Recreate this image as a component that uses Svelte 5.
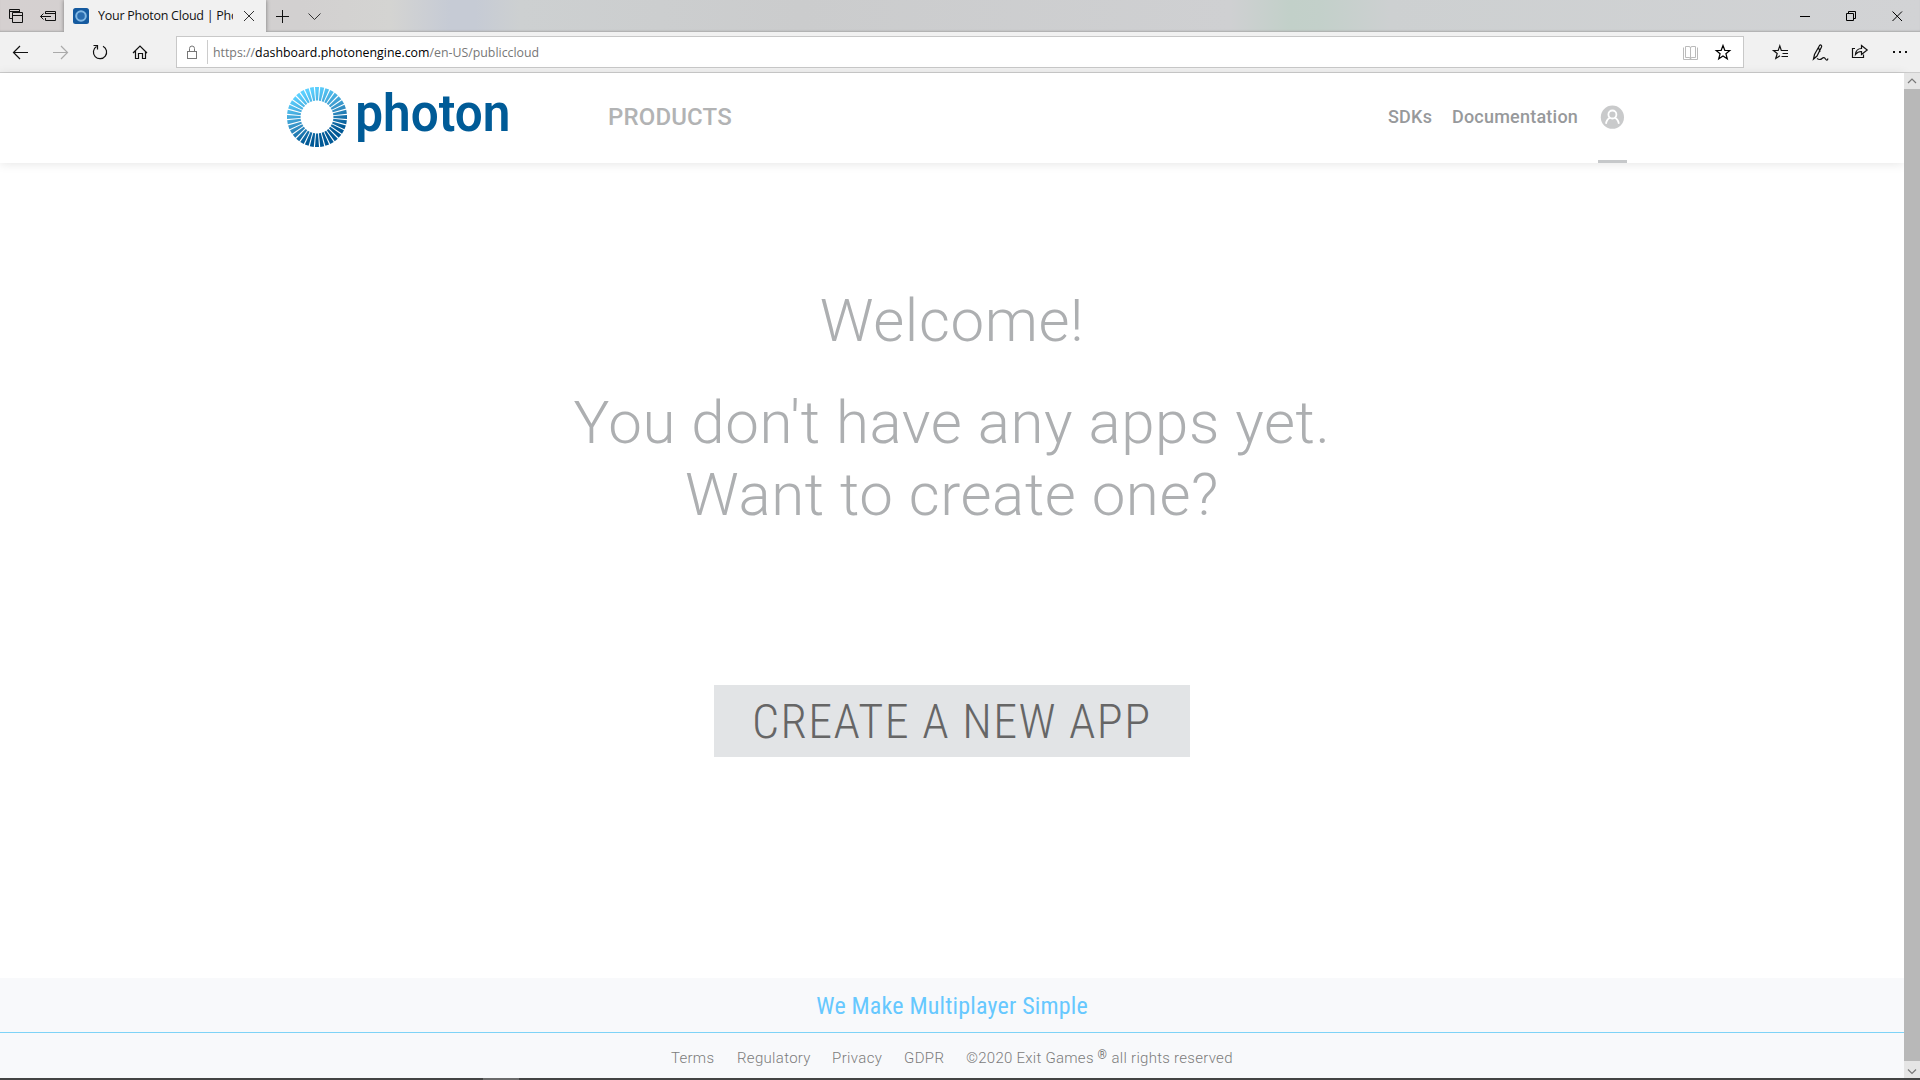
<script>
  const rays = Array.from({ length: 36 }, (_, i) => i * 10);
  const links = [
    { text: 'Terms', w: 43, gap: 22.5 },
    { text: 'Regulatory', w: 73.5, gap: 22 },
    { text: 'Privacy', w: 50, gap: 22 },
    { text: 'GDPR', w: 40, gap: 22 }
  ];
</script>

<div class="window">
  <div class="tabbar">
    <div class="tabtools">
      <svg width="64" height="32" viewBox="0 0 64 32" fill="none" stroke="#111">
        <path d="M12.5 18.5H9.5V9.5H19.5V12M9.5 11.5H19.500M12.500 21V12.500H22.500V22.500H12.500ZM12.500 15.500H22.500" />
        <path d="M45.500 14V11.500H55.500V20.500H45.500V18M45.500 13.500H55.500M40.500 16.500H51M43.500 13.500L40.500 16.500L43.500 19.500" />
      </svg>
    </div>
    <div class="tab">
      <svg class="fav" width="16" height="16" viewBox="0 0 16 16">
        <rect width="16" height="16" rx="2.500" fill="#155a9f" />
        <circle cx="8" cy="8" r="4.800" fill="#2a6db0" stroke="#82b8e4" stroke-width="2" />
      </svg>
      <span class="title">Your Photon Cloud | Photon</span>
      <svg width="12" height="12" viewBox="0 0 12 12" stroke="#333" fill="none"><path d="M1 1L11 11M11 1L1 11" /></svg>
    </div>
    <svg class="newtab" width="60" height="32" viewBox="0 0 60 32" stroke="#111" fill="none">
      <path d="M10 16.500H23M16.500 10V23" /><path d="M42.500 13.500L48.500 19.500L54.500 13.500" stroke="#333" />
    </svg>
    <svg class="controls" width="130" height="32" viewBox="0 0 130 32" stroke="#000" fill="none">
      <path d="M10 16.500H20M56.500 13.500H63.500V20.500H56.500ZM58.500 13V11.500H65.500V18.500H64M102.500 11.500L112 21M112 11.500L102.500 21" />
    </svg>
  </div>

  <div class="toolbar">
    <svg width="176" height="40" viewBox="0 32 176 40" fill="none" stroke="#111" stroke-width="1.200">
      <path d="M28 52.500H13.500M20 46L13.500 52.500L20 59" />
      <path d="M53 52.500H67.500M61 46L67.500 52.500L61 59" stroke="#aaa" />
      <path d="M103 46.200A6.600 6.600 0 1 1 96.500 46.500M93.500 45.500H97.500V49.500" />
      <path d="M133 53L140 46L147 53M135.500 51V58.500H138.500V53.500H142.500V58.500H145.500V51" />
    </svg>
    <div class="address">
      <svg width="34" height="30" viewBox="177 37 34 30" fill="none" stroke="#777">
        <rect x="187.500" y="51.500" width="9" height="7" /><path d="M189.500 51V48.500Q189.500 46 192 46T194.500 48.500V51" /><path d="M207.500 40V64" stroke="#ccc" />
      </svg>
      <span class="url">https://<b>dashboard.photonengine.com</b>/en-US/publiccloud</span>
      <svg class="end" width="67" height="30" viewBox="1676 37 67 30" fill="none" stroke="#000">
        <path stroke="#bbb" d="M1683.500 47.500V59.500H1697.500V47.500M1685.500 46.500H1689Q1690.500 46.500 1690.500 48Q1690.500 46.500 1692 46.500H1695.500V57.500H1692Q1690.500 57.500 1690.500 59Q1690.500 57.500 1689 57.500H1685.500ZM1690.500 48V59" />
        <path stroke-width="1.200" d="M1723 45.500L1724.800 50.300L1729.800 50.500L1725.900 53.700L1727.300 58.800L1723 55.900L1718.700 58.800L1720.100 53.700L1716.200 50.500L1721.200 50.300Z" />
      </svg>
    </div>
    <svg width="176" height="40" viewBox="1744 32 176 40" fill="none" stroke="#111" stroke-width="1.200">
      <path d="M1788 50.500H1781.300L1779.800 45.800L1778.200 50.500H1773.500L1777.200 53.500L1775.800 58.500L1780 55.800M1782.500 53.500H1788M1781.500 56.500H1788" />
      <path d="M1813.500 59L1814.500 54.500L1819.500 45.500Q1820.500 44.500 1821.300 45.300Q1822 46 1821.500 47L1817 56ZM1818.500 47.500L1820 52M1817 58.500Q1820 60.500 1822 58.500T1825.500 59T1828 58.500" />
      <path d="M1855 48.500H1852.500V57.500H1863.500V54.500M1855.500 54.500Q1856 48.500 1861.500 48.500V45.500L1867.200 50L1861.500 54.500V51.500Q1858 51.300 1855.500 54.500Z" />
      <path d="M1893 52H1895M1899 52H1901M1905 52H1907" stroke-width="2" />
    </svg>
  </div>

  <div class="view">
    <div class="page">
      <header>
        <svg class="logo" width="226" height="64" viewBox="286 86 226 64">
          <defs><linearGradient id="g" gradientUnits="userSpaceOnUse" x1="306" y1="92" x2="328" y2="142"><stop offset="0" stop-color="#5bd0ff" /><stop offset="0.500" stop-color="#3692c6" /><stop offset="0.850" stop-color="#005996" /></linearGradient>
            <mask id="m"><g fill="#fff">{#each rays as a}<path d="M316 100.600L315 87H319L318 100.600Z" transform="rotate({a} 317 117)" />{/each}</g></mask></defs>
          <rect x="286" y="86" width="62" height="62" fill="url(#g)" mask="url(#m)" />
          <text x="355.300" y="130.500" textLength="155" lengthAdjust="spacingAndGlyphs" class="word">photon</text>
        </svg>
        <nav><span class="products">PRODUCTS</span></nav>
        <div class="right"><span class="sdks">SDKs</span><span>Documentation</span></div>
        <div class="user">
          <svg width="24" height="24" viewBox="0 0 24 24"><circle cx="12.400" cy="12.200" r="11.600" fill="#c9cacb" /><g fill="none" stroke="#fff" stroke-width="1.800"><circle cx="12.400" cy="9.500" r="4" /><path d="M5.900 18.700Q6.900 13.700 10.100 12.800M18.900 18.700Q17.900 13.700 14.700 12.800" /></g></svg>
        </div>
      </header>
      <main>
        <h1>Welcome!</h1>
        <h2>You don't have any apps yet.<br />Want to create one?</h2>
        <button><svg width="400" height="72"><text x="-1" y="53" textLength="398" lengthAdjust="spacing">CREATE A NEW APP</text></svg></button>
      </main>
      <footer>
        <div class="tag"><svg width="272" height="54"><text x="0.300" y="36" textLength="271.500" lengthAdjust="spacing">We Make Multiplayer Simple</text></svg></div>
        <div class="links">
          {#each links as l}
            <svg width={l.w} height="45" style="margin-right:{l.gap}px"><text x="0" y="30" textLength={l.w} lengthAdjust="spacing">{l.text}</text></svg>
          {/each}
          <svg width="267" height="45"><text x="0" y="30" textLength="127.500">©2020 Exit Games</text><text class="reg" x="131.500" y="26">®</text><text x="145.500" y="30" textLength="121">all rights reserved</text></svg>
        </div>
      </footer>
    </div>
    <div class="scroll">
      <svg width="16" height="16" fill="none" stroke="#777" stroke-width="1.200"><path d="M4 10L8 6L12 10" /></svg>
      <div class="thumb"></div>
      <svg width="16" height="17" fill="none" stroke="#777" stroke-width="1.200"><path d="M4 8.500L8 12.500L12 8.500" /></svg>
    </div>
  </div>
  <div class="taskbar"><i></i></div>
</div>

<style>
  :global(body) { margin: 0; overflow: hidden; }
  .window { width: 1920px; height: 1080px; display: flex; flex-direction: column; background: #fff; font-family: Roboto, sans-serif; overflow: hidden; }
  svg { display: block; flex: none; overflow: visible; }
  .tabbar { height: 32px; flex: none; display: flex; background: linear-gradient(90deg, #d5d0d0 0, #d2d0d0 300px, #d4d4d2 390px, #c6cbd5 450px, #c6cbd5 475px, #cdd0d1 520px, #cbcccd 800px, #cfd0d2 1230px, #c2d0c9 1290px, #c3d0ca 1320px, #cdd0d1 1390px, #d2d3d5 1920px); box-shadow: inset 0 -2px 2px -1px #aaa; }
  .tabtools { width: 64px; }
  .tab { width: 202px; box-sizing: border-box; display: flex; align-items: center; padding-left: 9px; background: #f1f1f1; box-shadow: 0 0 4px #777; clip-path: inset(0 -5px 0 -5px); }
  .fav { margin-right: 9px; }
  .title { width: 135px; margin-right: 10px; overflow: hidden; white-space: nowrap; font: 12.500px/32px "Open Sans", sans-serif; letter-spacing: -0.250px; height: 32px; color: #111; }
  .controls { margin-left: auto; }
  .toolbar { height: 40px; flex: none; display: flex; background: #f1f1f1; border-bottom: 1px solid #ccc; }
  .address { box-sizing: border-box; width: 1568px; height: 32px; margin-top: 4px; display: flex; background: #fff; border: 1px solid #c8c8c8; }
  .url { font: 12.350px/32px "Open Sans", sans-serif; height: 30px; color: #777; padding-left: 2px; }
  .url b { font-weight: 400; color: #000; }
  .end { margin-left: auto; }
  .view { height: 1005px; display: flex; }
  .page { width: 1904px; display: flex; flex-direction: column; }
  header { height: 90px; flex: none; display: flex; box-shadow: 0 1px 10px rgba(0,0,0,.1); background: #fff; }
  .logo { margin: 13px 0 0 286px; }
  nav { margin-left: 96px; width: 778px; font-size: 24px; font-weight: 500; line-height: 88.500px; color: #b2b3b4; letter-spacing: .15px; }
  .right { display: flex; font-size: 18px; font-weight: 500; line-height: 88px; color: #97999b; width: 212px; letter-spacing: .22px; }
  .sdks { margin: 0 19.800px 0 2px; }
  .user { box-sizing: border-box; width: 29px; height: 90px; padding: 32px 0 0 2px; border-bottom: 3px solid #c6c8ca; }
  main { flex: 1; display: flex; flex-direction: column; align-items: center; text-align: center; }
  h1, h2 { margin: 0; font-size: 60px; font-weight: 300; line-height: 72px; color: #adafb1; letter-spacing: .6px; }
  h1 { margin-top: 122px; }
  h2 { margin-top: 30px; }
  button { margin-top: 154px; padding: 0 0 0 39px; width: 476px; height: 72px; border: 0; background: #e2e4e6; }
  button text { font: 300 48px Roboto, sans-serif; font-stretch: 75%; fill: #666; }
  footer { height: 100px; background: #f8f9fb; }
  .tag { height: 54px; display: flex; justify-content: center; border-bottom: 1px solid #7ed3f7; }
  .tag text { font: 400 24px Roboto, sans-serif; font-stretch: 75%; fill: #66c8ff; }
  .links { display: flex; justify-content: center; }
  .links text { font: 300 15px Roboto, sans-serif; fill: #7c7c7c; }
  .links .reg { font-size: 12px; font-weight: 400; }
  .word { font: 600 51px Roboto, sans-serif; fill: #005b97; }
  .scroll { width: 16px; display: flex; flex-direction: column; background: #e5e5e5; }
  .thumb { flex: 1; background: #b8b8b8; }
  .taskbar { height: 2px; background: #444; }
  .taskbar i { display: block; width: 36px; height: 2px; margin-left: 483px; background: #6b6b6b; }
</style>
